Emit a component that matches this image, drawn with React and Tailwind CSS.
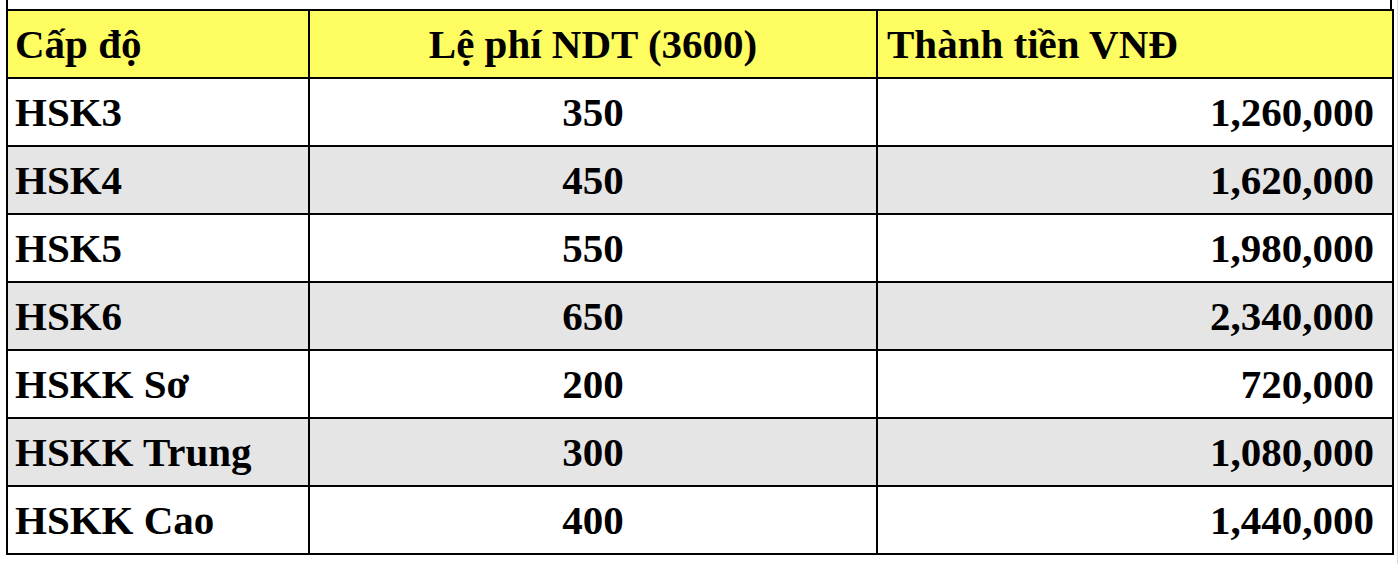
import React from "react";

const rows = [
  { level: "HSK3", fee: "350", vnd: "1,260,000" },
  { level: "HSK4", fee: "450", vnd: "1,620,000" },
  { level: "HSK5", fee: "550", vnd: "1,980,000" },
  { level: "HSK6", fee: "650", vnd: "2,340,000" },
  { level: "HSKK Sơ", fee: "200", vnd: "720,000" },
  { level: "HSKK Trung", fee: "300", vnd: "1,080,000" },
  { level: "HSKK Cao", fee: "400", vnd: "1,440,000" },
];

export default function App() {
  return (
    <div
      className="w-[1400px] h-[564px] bg-white overflow-hidden flex text-black font-bold"
      style={{ fontFamily: '"Liberation Serif", "Times New Roman", serif' }}
    >
      <div className="pl-[6px]">
        {/* spreadsheet lines above the table */}
        <div className="h-[9px] w-[1386px] border-x-2 border-black" />
        <table className="border-collapse table-fixed w-[1386px] text-[41px] leading-none">
          <colgroup>
            <col className="w-[302px]" />
            <col className="w-[568px]" />
            <col className="w-[516px]" />
          </colgroup>
          <thead>
            <tr className="h-[68px] bg-[#fdfc60]">
              <th className="border-2 border-black text-left pl-[7px] font-bold">Cấp độ</th>
              <th className="border-2 border-black text-center font-bold">Lệ phí NDT (3600)</th>
              <th className="border-2 border-black text-left pl-[9px] font-bold">Thành tiền VNĐ</th>
            </tr>
          </thead>
          <tbody>
            {rows.map((r, i) => (
              <tr key={r.level} className={`h-[68px] ${i % 2 === 1 ? "bg-[#e5e5e5]" : "bg-white"}`}>
                <td className="border-2 border-black text-left pl-[7px]">{r.level}</td>
                <td className="border-2 border-black text-center">{r.fee}</td>
                <td className="border-2 border-black text-right pr-[18px]">{r.vnd}</td>
              </tr>
            ))}
          </tbody>
        </table>
      </div>
      <div className="ml-[3px] border-l border-[#dcdcdc] h-full" />
    </div>
  );
}
